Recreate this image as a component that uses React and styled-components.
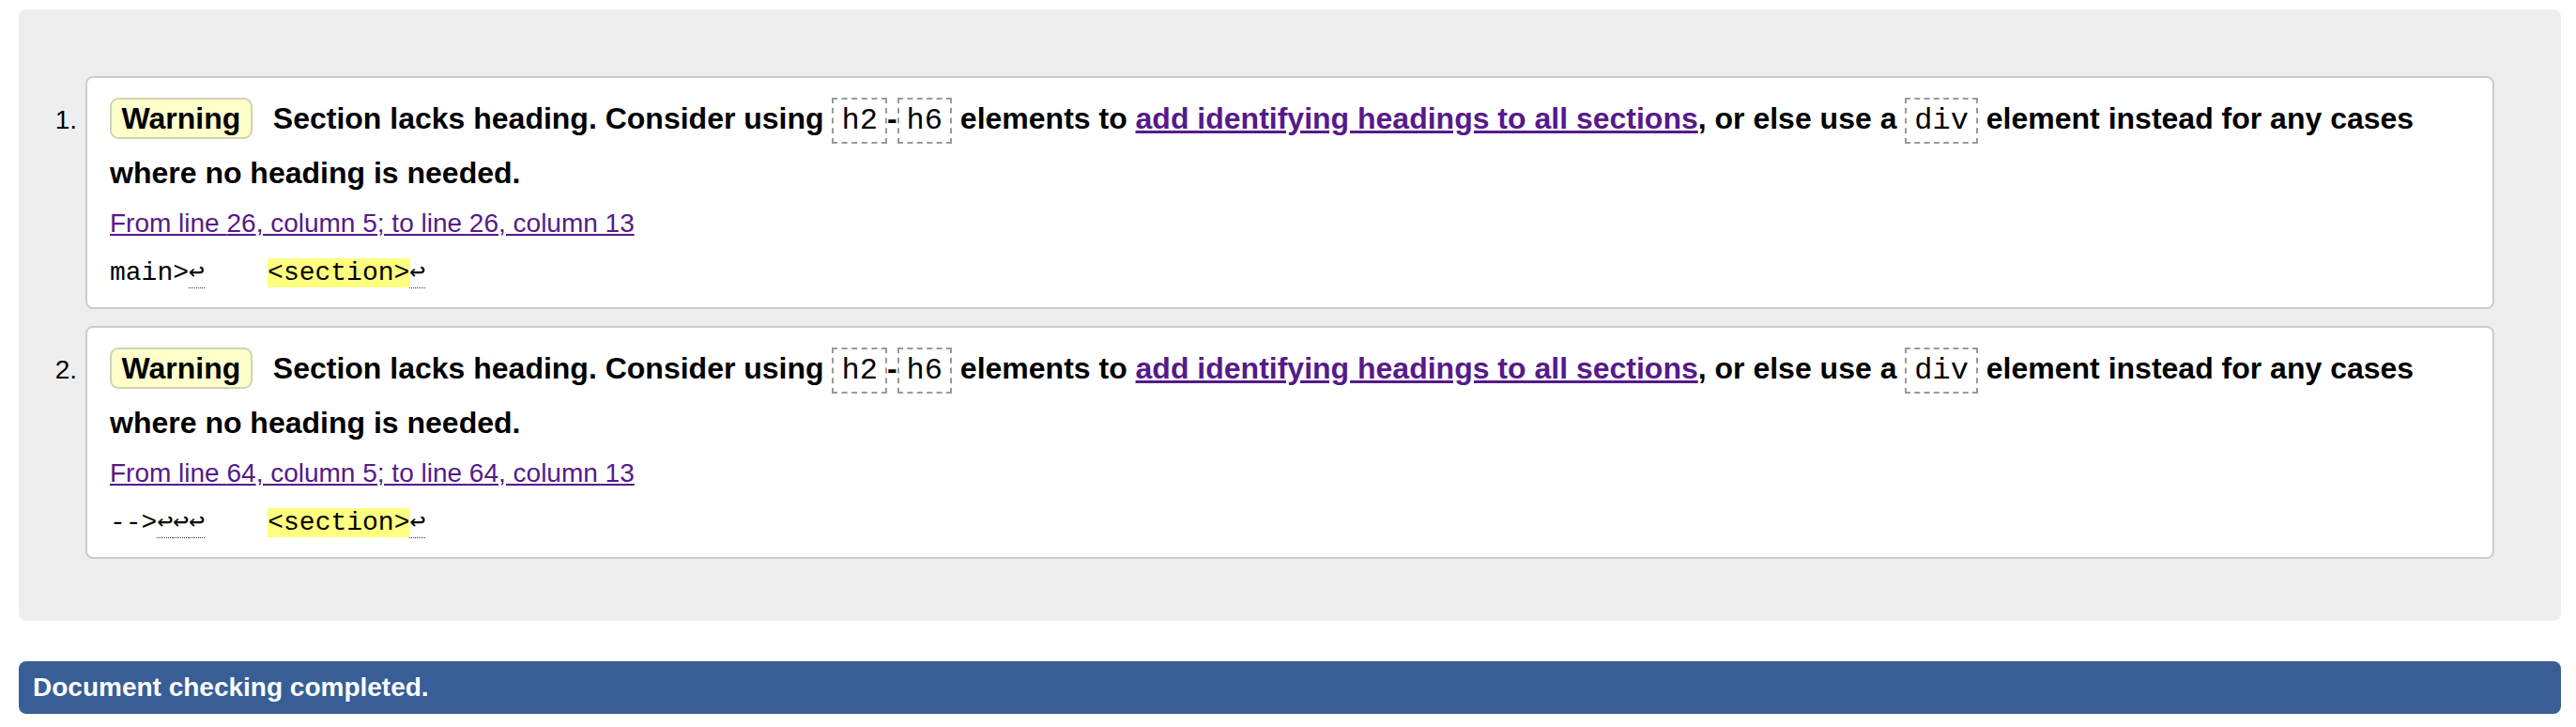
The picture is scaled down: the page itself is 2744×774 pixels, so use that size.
import React from "react";
import styled, { createGlobalStyle } from "styled-components";

const GlobalStyle = createGlobalStyle`
  html, body { margin: 0; padding: 0; background: #fff; }
  body {
    font-family: "Liberation Sans", Arial, Helvetica, sans-serif;
    color: #000;
  }
`;

const Page = styled.div`
  padding: 10px 16px 14px 20px;
`;

const Results = styled.ol`
  list-style: none;
  margin: 0;
  background: #eeeeee;
  border-radius: 8px;
  padding: 71px 71px 66px 0;
  display: flex;
  flex-direction: column;
  gap: 18px;
`;

const Row = styled.li`
  display: flex;
  align-items: baseline;
`;

const Number = styled.span`
  flex: 0 0 71px;
  box-sizing: border-box;
  padding-right: 9px;
  text-align: right;
  font-size: 28px;
`;

const Card = styled.div`
  flex: 1;
  min-width: 0;
  background: #fff;
  border: 2px solid #cccccc;
  border-radius: 8px;
  padding: 14px 24px 11px;
`;

const Message = styled.p`
  margin: 0;
  font-size: 32px;
  font-weight: bold;
  line-height: 58px;
`;

const Badge = styled.strong`
  display: inline-block;
  background: #ffffcc;
  border: 2px solid #d2d2b4;
  border-radius: 9px;
  padding: 0 10.5px;
  line-height: 40px;
  margin-right: 22px;
`;

const Code = styled.code`
  font-family: "Liberation Mono", "Courier New", monospace;
  font-size: 32px;
  font-weight: normal;
  line-height: 32px;
  border: 2px dashed #9a9a9a;
  padding: 4px 8px;
`;

const MsgLink = styled.a`
  color: #551a8b;
  text-decoration: underline;
`;

const Location = styled.p`
  margin: 0;
  font-size: 28px;
  line-height: 50px;
`;

const LocLink = styled.a`
  color: #551a8b;
  text-decoration: underline;
`;

const Extract = styled.p`
  margin: 0;
  padding-top: 3px;
  font-family: "Liberation Mono", "DejaVu Sans Mono", "Courier New", monospace;
  font-size: 28px;
  line-height: 50px;
  white-space: pre;
`;

const Mark = styled.mark`
  background: #ffff80;
  color: #000;
`;

const Lf = styled.b`
  font-weight: normal;
  line-height: 28px;
  border-bottom: 1px dotted #333;
  font-family: "Liberation Mono", "DejaVu Sans Mono", monospace;
`;

const StatusBar = styled.p`
  margin: 43px 0 0;
  background: #375e97;
  color: #fff;
  border-radius: 8px;
  padding: 0 15px;
  height: 56px;
  line-height: 56px;
  font-size: 28px;
  font-weight: bold;
`;

const messages = [
  { n: 1, line: 26, lead: "main>", lfBefore: 1 },
  { n: 2, line: 64, lead: "-->", lfBefore: 3 },
];

function Breaks({ count }) {
  return (
    <>
      {Array.from({ length: count }).map((_, i) => (
        <Lf key={i} title="Line break">↩</Lf>
      ))}
    </>
  );
}

export default function App() {
  return (
    <>
      <GlobalStyle />
      <Page>
        <Results>
          {messages.map((m) => (
            <Row key={m.n}>
              <Number>{m.n}.</Number>
              <Card>
                <Message>
                  <Badge>Warning</Badge>
                  Section lacks heading. Consider using <Code>h2</Code>-<Code>h6</Code> elements to{" "}
                  <MsgLink href="#">add identifying headings to all sections</MsgLink>, or else use a{" "}
                  <Code>div</Code> element instead for any cases where no heading is needed.
                </Message>
                <Location>
                  <LocLink href="#">
                    From line {m.line}, column 5; to line {m.line}, column 13
                  </LocLink>
                </Location>
                <Extract>
                  {m.lead}
                  <Breaks count={m.lfBefore} />
                  {"    "}
                  <Mark>{"<section>"}</Mark>
                  <Breaks count={1} />
                </Extract>
              </Card>
            </Row>
          ))}
        </Results>
        <StatusBar>Document checking completed.</StatusBar>
      </Page>
    </>
  );
}
